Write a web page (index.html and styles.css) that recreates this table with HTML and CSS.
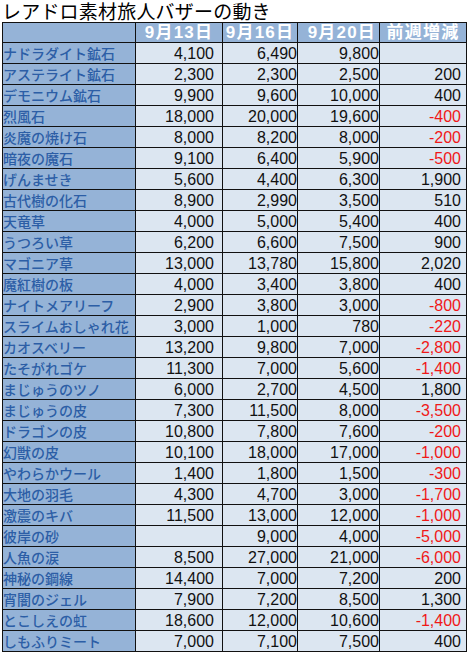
FILE: index.html
```html
<!DOCTYPE html>
<html lang="ja">
<head>
<meta charset="utf-8">
<title>レアドロ素材旅人バザーの動き</title>
<link rel="stylesheet" href="styles.css">
</head>
<body>
<h1 class="title">レアドロ素材旅人バザーの動き</h1>
<table class="sheet">
<colgroup>
<col class="c-name"><col class="c-d1"><col class="c-d2"><col class="c-d3"><col class="c-diff">
</colgroup>
<thead>
<tr class="head"><th></th><th>9月13日</th><th>9月16日</th><th class="h3">9月20日</th><th>前週増減</th></tr>
</thead>
<tbody>
<tr><th>ナドラダイト鉱石</th><td class="d1">4,100</td><td>6,490</td><td>9,800</td><td class="df"></td></tr>
<tr><th>アステライト鉱石</th><td class="d1">2,300</td><td>2,300</td><td>2,500</td><td class="df">200</td></tr>
<tr><th>デモニウム鉱石</th><td class="d1">9,900</td><td>9,600</td><td>10,000</td><td class="df">400</td></tr>
<tr><th>烈風石</th><td class="d1">18,000</td><td>20,000</td><td>19,600</td><td class="df neg">-400</td></tr>
<tr><th>炎魔の焼け石</th><td class="d1">8,000</td><td>8,200</td><td>8,000</td><td class="df neg">-200</td></tr>
<tr><th>暗夜の魔石</th><td class="d1">9,100</td><td>6,400</td><td>5,900</td><td class="df neg">-500</td></tr>
<tr><th>げんませき</th><td class="d1">5,600</td><td>4,400</td><td>6,300</td><td class="df">1,900</td></tr>
<tr><th>古代樹の化石</th><td class="d1">8,900</td><td>2,990</td><td>3,500</td><td class="df">510</td></tr>
<tr><th>天竜草</th><td class="d1">4,000</td><td>5,000</td><td>5,400</td><td class="df">400</td></tr>
<tr><th>うつろい草</th><td class="d1">6,200</td><td>6,600</td><td>7,500</td><td class="df">900</td></tr>
<tr><th>マゴニア草</th><td class="d1">13,000</td><td>13,780</td><td>15,800</td><td class="df">2,020</td></tr>
<tr><th>魔紅樹の板</th><td class="d1">4,000</td><td>3,400</td><td>3,800</td><td class="df">400</td></tr>
<tr><th>ナイトメアリーフ</th><td class="d1">2,900</td><td>3,800</td><td>3,000</td><td class="df neg">-800</td></tr>
<tr><th>スライムおしゃれ花</th><td class="d1">3,000</td><td>1,000</td><td>780</td><td class="df neg">-220</td></tr>
<tr><th>カオスベリー</th><td class="d1">13,200</td><td>9,800</td><td>7,000</td><td class="df neg">-2,800</td></tr>
<tr><th>たそがれゴケ</th><td class="d1">11,300</td><td>7,000</td><td>5,600</td><td class="df neg">-1,400</td></tr>
<tr><th>まじゅうのツノ</th><td class="d1">6,000</td><td>2,700</td><td>4,500</td><td class="df">1,800</td></tr>
<tr><th>まじゅうの皮</th><td class="d1">7,300</td><td>11,500</td><td>8,000</td><td class="df neg">-3,500</td></tr>
<tr><th>ドラゴンの皮</th><td class="d1">10,800</td><td>7,800</td><td>7,600</td><td class="df neg">-200</td></tr>
<tr><th>幻獣の皮</th><td class="d1">10,100</td><td>18,000</td><td>17,000</td><td class="df neg">-1,000</td></tr>
<tr><th>やわらかウール</th><td class="d1">1,400</td><td>1,800</td><td>1,500</td><td class="df neg">-300</td></tr>
<tr><th>大地の羽毛</th><td class="d1">4,300</td><td>4,700</td><td>3,000</td><td class="df neg">-1,700</td></tr>
<tr><th>激震のキバ</th><td class="d1">11,500</td><td>13,000</td><td>12,000</td><td class="df neg">-1,000</td></tr>
<tr><th>彼岸の砂</th><td class="d1"></td><td>9,000</td><td>4,000</td><td class="df neg">-5,000</td></tr>
<tr><th>人魚の涙</th><td class="d1">8,500</td><td>27,000</td><td>21,000</td><td class="df neg">-6,000</td></tr>
<tr><th>神秘の鋼線</th><td class="d1">14,400</td><td>7,000</td><td>7,200</td><td class="df">200</td></tr>
<tr><th>宵闇のジェル</th><td class="d1">7,900</td><td>7,200</td><td>8,500</td><td class="df">1,300</td></tr>
<tr><th>とこしえの虹</th><td class="d1">18,600</td><td>12,000</td><td>10,600</td><td class="df neg">-1,400</td></tr>
<tr><th>しもふりミート</th><td class="d1">7,000</td><td>7,100</td><td>7,500</td><td class="df">400</td></tr>
</tbody>
</table>
</body>
</html>
```
FILE: styles.css
```css
html, body {
  margin: 0;
  padding: 0;
  background: #ffffff;
}

body {
  font-family: "Liberation Sans", "Noto Sans CJK JP", sans-serif;
}

.title {
  margin: 0;
  padding: 0 0 0 2px;
  font-family: "Noto Sans CJK JP", sans-serif;
  font-weight: 400;
  font-size: 19px;
  line-height: 22px;
  letter-spacing: 0.2px;
  color: #000;
  white-space: nowrap;
}

.sheet {
  margin-left: 2px;
  border-collapse: collapse;
  table-layout: fixed;
  width: 465px;
}

.c-name { width: 133px; }
.c-d1 { width: 87px; }
.c-d2 { width: 75px; }
.c-d3 { width: 82px; }
.c-diff { width: 87px; }

.sheet th,
.sheet td {
  border: 1px solid #111;
  padding: 0;
  white-space: nowrap;
  overflow: hidden;
}

.sheet tbody tr {
  height: 21px;
}

.sheet .head {
  height: 20px;
}

.head th {
  background: #95b3d7;
  color: #ffffff;
  font-family: "Liberation Sans", "Noto Sans CJK JP", sans-serif;
  font-weight: 700;
  font-size: 17px;
  line-height: 18px;
  letter-spacing: 1.2px;
  text-align: center;
}

.head th.h3 {
  text-align: right;
  padding-right: 3px;
}

tbody th {
  background: #95b3d7;
  color: #2c5ea6;
  font-family: "Noto Sans CJK JP", sans-serif;
  font-weight: 500;
  font-size: 14px;
  line-height: 19px;
  text-align: left;
  padding-left: 2px;
  letter-spacing: 0;
}

tbody td {
  background: #dce6f1;
  color: #111;
  font-size: 16px;
  line-height: 19px;
  text-align: right;
  padding-right: 4px;
}

tbody td.d1 {
  padding-right: 8px;
}

tbody td.df {
  padding-right: 5px;
}

tbody td.neg {
  color: #f01818;
}
```
